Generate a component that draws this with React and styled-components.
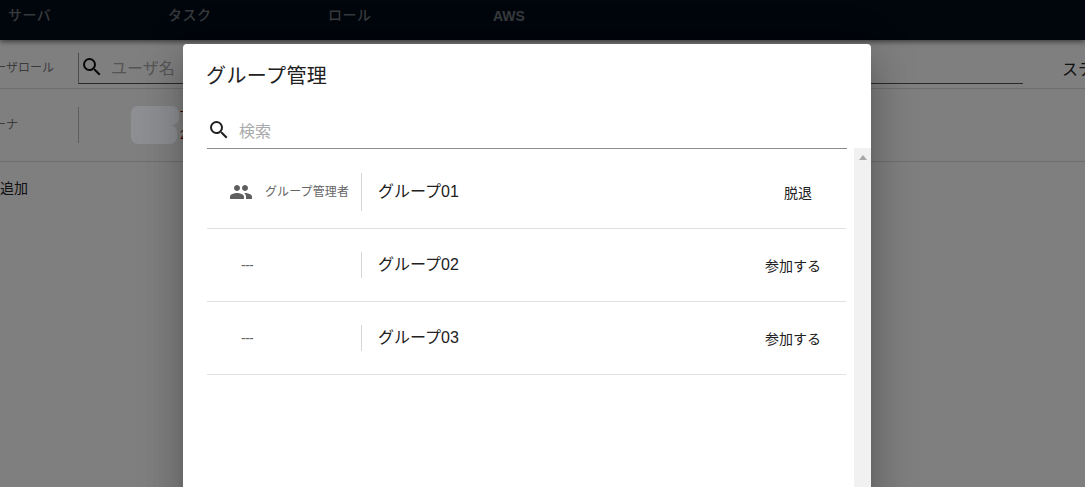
import React from "react";
import styled, {createGlobalStyle} from "styled-components";
import {MdSearch, MdPeople} from "react-icons/md";

const GlobalStyle = createGlobalStyle`
  html, body {
    margin: 0;
    height: 100%;
    overflow: hidden;
  }
  body {
    font-family: "Liberation Sans", "Noto Sans CJK JP", sans-serif;
    background: #fff;
  }
`

const Page = styled.div`
  position: relative;
  width: 1085px;
  height: 487px;
  overflow: hidden;
  color: #222;
`

const TopBar = styled.nav`
  display: flex;
  align-items: center;
  height: 30px;
  padding-bottom: 10px;
  background: #020c18;
  box-shadow: 0 2px 5px rgba(0, 0, 0, 0.5);
`

const NavItem = styled.div`
  width: ${props => props.$width}px;
  padding-left: ${props => props.$left || 0}px;
  padding-top: ${props => (props.$latin ? 2 : 0)}px;
  padding-bottom: ${props => (props.$latin ? 0 : 2)}px;
  box-sizing: border-box;
  font-size: 14px;
  letter-spacing: ${props => (props.$latin ? 0 : "0.5px")};
  font-weight: ${props => (props.$latin ? 700 : 500)};
  color: #6f757b;
`

const FilterRow = styled.div`
  display: flex;
  align-items: center;
  height: 40px;
  padding-top: 8px;
  border-bottom: 1px solid #ddd;
`

const RowLabel = styled.div`
  display: flex;
  justify-content: flex-end;
  flex: none;
  width: ${props => props.$width}px;
  margin-right: ${props => props.$gap}px;
  margin-bottom: 4px;
  font-size: 12px;
  white-space: nowrap;
  color: #777;
`

const SearchBox = styled.div`
  display: flex;
  align-items: center;
  flex: none;
  gap: 7px;
  width: 945px;
  height: 31px;
  box-sizing: border-box;
  padding: 0 0 2px 1px;
  border-left: 1px solid #999;
  border-bottom: 1px solid #555;
  font-size: 16px;
  color: #aaa;
  svg {
    color: #111;
  }
`

const StatusLabel = styled.div`
  margin-left: 39px;
  font-size: 16px;
  white-space: nowrap;
  color: #222;
`

const UserRow = styled.div`
  display: flex;
  align-items: center;
  height: 72px;
  border-bottom: 1px solid #ddd;
`

const VLine = styled.div`
  flex: none;
  width: 1px;
  height: 36px;
  background: #bbb;
`

const Mosaic = styled.div`
  position: relative;
  z-index: 1;
  flex: none;
  display: flex;
  flex-direction: column;
  width: 48px;
  margin-left: 52px;
`

const MosaicPatch = styled.div`
  width: ${props => (props.$lower ? 46 : 48)}px;
  height: 19px;
  border-radius: ${props => (props.$lower ? "0 7px 7px 7px" : "7px 7px 7px 0")};
  background: #8e8f93;
`

const UserText = styled.div`
  display: flex;
  flex-direction: column;
  gap: 3px;
  margin-left: 1px;
  font-size: 13px;
  line-height: 16px;
  color: #700;
`

const AddLink = styled.div`
  display: flex;
  justify-content: flex-end;
  width: 28px;
  margin-top: 15px;
  font-size: 14px;
  white-space: nowrap;
  color: #222;
`

const Scrim = styled.div`
  position: absolute;
  left: 0;
  right: 0;
  top: 0;
  bottom: 0;
  background: rgba(0, 0, 0, 0.5);
`

const Modal = styled.section`
  position: absolute;
  z-index: 2;
  left: 183px;
  top: 44px;
  width: 688px;
  height: 480px;
  box-sizing: border-box;
  padding-top: 20px;
  background: #fff;
  border-radius: 4px;
  box-shadow: 0 11px 15px -7px rgba(0, 0, 0, 0.2), 0 24px 38px 3px rgba(0, 0, 0, 0.14), 0 9px 46px 8px rgba(0, 0, 0, 0.12);
`

const ModalTitle = styled.h2`
  margin: 0 0 0 23px;
  font-size: 20px;
  line-height: 24px;
  letter-spacing: 0.4px;
  font-weight: 400;
  color: #212121;
`

const ModalSearch = styled.div`
  display: flex;
  align-items: center;
  gap: 8px;
  width: 640px;
  height: 36px;
  margin: 24px 0 0 24px;
  border-bottom: 1px solid #8c8c8c;
  font-size: 16px;
  color: #aaa;
  svg {
    color: #212121;
  }
`

const ListArea = styled.div`
  display: flex;
`

const List = styled.div`
  width: 639px;
  margin-left: 24px;
  padding-top: 7px;
`

const GroupRow = styled.div`
  display: flex;
  align-items: center;
  height: 72px;
  border-bottom: 1px solid #e0e0e0;
`

const RoleCell = styled.div`
  display: flex;
  align-items: center;
  width: 155px;
  height: ${props => (props.$empty ? 26 : 38)}px;
  box-sizing: border-box;
  padding-left: ${props => (props.$empty ? 34 : 22)}px;
  border-right: 1px solid #d6d6d6;
  font-size: ${props => (props.$empty ? 14 : 12)}px;
  letter-spacing: ${props => (props.$empty ? "-0.6px" : "0.1px")};
  color: #666;
  white-space: nowrap;
  svg {
    color: #5f5f5f;
    margin-right: 12px;
  }
`

const RoleText = styled.span`
  margin-bottom: 3px;
`

const GroupName = styled.div`
  flex: 1;
  padding-left: 16px;
  margin-top: -4px;
  font-size: 16px;
  color: #212121;
`

const ActionButton = styled.button`
  width: 88px;
  margin-right: ${props => (props.$wide ? 9 : 4)}px;
  padding: 0;
  border: 0;
  background: none;
  font: inherit;
  font-size: 14px;
  color: #212121;
`

const Scrollbar = styled.div`
  flex: none;
  display: flex;
  justify-content: center;
  width: 17px;
  height: 340px;
  margin: -1px 0 0 8px;
  padding-top: 7px;
  box-sizing: border-box;
  background: #f1f1f1;
`

const ScrollArrow = styled.div`
  width: 0;
  height: 0;
  border-left: 4px solid transparent;
  border-right: 4px solid transparent;
  border-bottom: 5px solid #a8a8a8;
`

const groups = [
    {name: "グループ01", admin: true, action: "脱退"},
    {name: "グループ02", admin: false, action: "参加する"},
    {name: "グループ03", admin: false, action: "参加する"}
];

const App = () => (
    <Page>
        <GlobalStyle/>
        <TopBar>
            <NavItem $width={168} $left={8}>サーバ</NavItem>
            <NavItem $width={160}>タスク</NavItem>
            <NavItem $width={165}>ロール</NavItem>
            <NavItem $width={100} $latin>AWS</NavItem>
        </TopBar>
        <FilterRow>
            <RowLabel $width={54} $gap={24}>ユーザロール</RowLabel>
            <SearchBox><MdSearch size={24}/>ユーザ名</SearchBox>
            <StatusLabel>ステータス</StatusLabel>
        </FilterRow>
        <UserRow>
            <RowLabel $width={18} $gap={60}>オーナ</RowLabel>
            <VLine/>
            <Mosaic>
                <MosaicPatch/>
                <MosaicPatch $lower/>
            </Mosaic>
            <UserText><span>T</span><span>2</span></UserText>
        </UserRow>
        <AddLink>＋追加</AddLink>
        <Scrim/>
        <Modal>
            <ModalTitle>グループ管理</ModalTitle>
            <ModalSearch><MdSearch size={24}/>検索</ModalSearch>
            <ListArea>
                <List>
                    {groups.map(group => (
                        <GroupRow key={group.name}>
                            <RoleCell $empty={!group.admin}>
                                {group.admin ? <><MdPeople size={24}/><RoleText>グループ管理者</RoleText></> : "---"}
                            </RoleCell>
                            <GroupName>{group.name}</GroupName>
                            <ActionButton $wide={group.action.length > 2}>{group.action}</ActionButton>
                        </GroupRow>
                    ))}
                </List>
                <Scrollbar><ScrollArrow/></Scrollbar>
            </ListArea>
        </Modal>
    </Page>
);

export default App;
